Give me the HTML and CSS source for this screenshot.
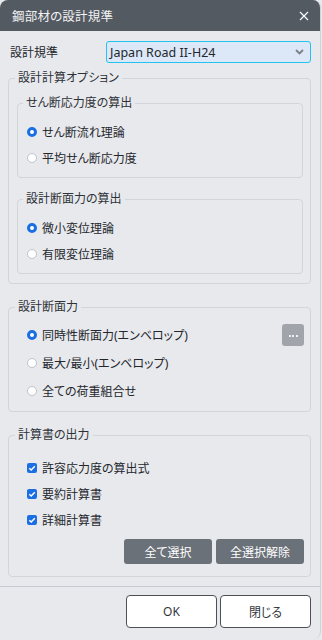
FILE: index.html
```html
<!DOCTYPE html>
<html lang="ja">
<head>
    <meta charset="UTF-8">
    <meta name="viewport" content="width=device-width, initial-scale=1.0">
    <title>鋼部材の設計規準</title>
    <link rel="stylesheet" href="styles.css">
</head>
<body>
    <div class="dialog">
        <div class="titlebar">
            <span class="title">鋼部材の設計規準</span>
            <svg class="close" width="10" height="10" viewBox="0 0 10 10">
                <path d="M1 1 L9 9 M9 1 L1 9" stroke="#ffffff" stroke-width="1.2" fill="none"/>
            </svg>
        </div>

        <div class="content">
            <div class="standard-row">
                <span class="label">設計規準</span>
                <div class="select">
                    <span>Japan Road II-H24</span>
                    <svg width="9" height="6" viewBox="0 0 9 6">
                        <path d="M1 1 L4.5 4.5 L8 1" stroke="#7b8087" stroke-width="1.8" fill="none"/>
                    </svg>
                </div>
            </div>

            <fieldset class="group outer">
                <legend>設計計算オプション</legend>

                <fieldset class="group inner">
                    <legend>せん断応力度の算出</legend>
                    <div class="option"><span class="radio checked"></span>せん断流れ理論</div>
                    <div class="option"><span class="radio"></span>平均せん断応力度</div>
                </fieldset>

                <fieldset class="group inner second">
                    <legend>設計断面力の算出</legend>
                    <div class="option"><span class="radio checked"></span>微小変位理論</div>
                    <div class="option"><span class="radio"></span>有限変位理論</div>
                </fieldset>
            </fieldset>

            <fieldset class="group section forces">
                <legend>設計断面力</legend>
                <div class="option tall">
                    <span class="radio checked"></span>同時性断面力(エンベロップ)
                    <span class="more-btn"><i></i><i></i><i></i></span>
                </div>
                <div class="option tall"><span class="radio"></span>最大/最小(エンベロップ)</div>
                <div class="option tall"><span class="radio"></span>全ての荷重組合せ</div>
            </fieldset>

            <fieldset class="group section output">
                <legend>計算書の出力</legend>
                <div class="option">
                    <svg class="check" width="10" height="10" viewBox="0 0 10 10"><rect width="10" height="10" rx="2" fill="#1b6fe3"/><path d="M2.3 5.2 L4.2 7 L7.8 3.2" stroke="#ffffff" stroke-width="1.5" fill="none"/></svg>許容応力度の算出式
                </div>
                <div class="option">
                    <svg class="check" width="10" height="10" viewBox="0 0 10 10"><rect width="10" height="10" rx="2" fill="#1b6fe3"/><path d="M2.3 5.2 L4.2 7 L7.8 3.2" stroke="#ffffff" stroke-width="1.5" fill="none"/></svg>要約計算書
                </div>
                <div class="option">
                    <svg class="check" width="10" height="10" viewBox="0 0 10 10"><rect width="10" height="10" rx="2" fill="#1b6fe3"/><path d="M2.3 5.2 L4.2 7 L7.8 3.2" stroke="#ffffff" stroke-width="1.5" fill="none"/></svg>詳細計算書
                </div>
                <div class="select-buttons">
                    <span class="dark-btn">全て選択</span>
                    <span class="dark-btn">全選択解除</span>
                </div>
            </fieldset>
        </div>

        <div class="footer">
            <span class="btn">OK</span>
            <span class="btn">閉じる</span>
        </div>
    </div>
</body>
</html>
```

FILE: styles.css
```css
* {
    margin: 0;
    padding: 0;
    box-sizing: border-box;
}

body {
    background-color: #e8e9ed;
    font-family: "Noto Sans", "Noto Sans CJK JP", sans-serif;
    font-feature-settings: "palt";
    font-size: 12px;
    color: #23272c;
}

.dialog {
    width: 321px;
    height: 639px;
    background-color: #e8e9ed;
    border-right: 1px solid #cfd2d7;
    border-radius: 8px;
    overflow: hidden;
    display: flex;
    flex-direction: column;
}

.titlebar {
    height: 31px;
    background-color: #545a61;
    display: flex;
    align-items: center;
    justify-content: space-between;
    padding: 0 12px 0 12px;
}

.title {
    color: #f2f3f5;
    font-size: 12.5px;
    letter-spacing: 0.2px;
}

.close {
    margin-right: -1px;
}

.content {
    padding: 10px 9px 0 8px;
}

.standard-row {
    display: flex;
    align-items: center;
    height: 22px;
}

.label {
    width: 98px;
    padding-left: 2px;
    font-size: 12px;
}

.select {
    flex: 1;
    height: 22px;
    background-color: #dce7f7;
    border: 1px solid #22c3ee;
    border-radius: 3px;
    display: flex;
    align-items: center;
    justify-content: space-between;
    padding: 0 6px 0 3px;
    font-size: 12.5px;
    color: #24282d;
}

.group {
    border: 1px solid #d2d5da;
    border-radius: 4px;
    min-width: 0;
}

.group legend {
    padding: 0 3px;
    line-height: 16px;
    font-size: 12px;
    color: #2e3237;
}

.outer {
    margin-top: 7px;
    padding: 9px 7px 9px 8px;
}

.outer > legend {
    margin-left: -2px;
}

.inner {
    padding: 8px 8px 6px 9px;
}

.inner > legend {
    margin-left: -4px;
}

.inner.second {
    margin-top: 13px;
}

.section {
    margin-top: 15px;
    padding: 6px 6px 6px 18px;
}

.section > legend {
    margin-left: -12px;
}

.output {
    padding-top: 12px;
    padding-bottom: 12px;
}

.option {
    height: 26px;
    display: flex;
    align-items: center;
}

.option.tall {
    height: 28px;
}

.radio {
    width: 10px;
    height: 10px;
    border-radius: 50%;
    background-color: #ffffff;
    border: 1px solid #bfc3c9;
    margin-right: 5px;
    flex-shrink: 0;
}

.radio.checked {
    background-color: #ffffff;
    border: 3px solid #1b6fe3;
}

.check {
    margin-right: 5px;
    flex-shrink: 0;
}

.more-btn {
    margin-left: auto;
    width: 22px;
    height: 22px;
    background-color: #a1a5ab;
    border-radius: 3px;
    display: flex;
    align-items: center;
    justify-content: center;
    gap: 1.5px;
    padding-top: 2px;
}

.more-btn i {
    width: 2px;
    height: 2px;
    background-color: #eef0f3;
}

.select-buttons {
    display: flex;
    justify-content: flex-end;
    gap: 4px;
    margin-top: 6px;
}

.dark-btn {
    width: 88px;
    height: 25px;
    background-color: #6b7179;
    color: #ffffff;
    border-radius: 3px;
    display: flex;
    align-items: center;
    justify-content: center;
    font-size: 12px;
}

.footer {
    margin-top: 9px;
    border-top: 1px solid #c6cad0;
    padding: 8px 9px 0 0;
    display: flex;
    justify-content: flex-end;
    gap: 3px;
}

.btn {
    width: 91px;
    height: 33px;
    background-color: #ffffff;
    border: 1px solid #4c5157;
    border-radius: 4px;
    display: flex;
    align-items: center;
    justify-content: center;
    font-size: 12px;
    color: #33373c;
}
```
